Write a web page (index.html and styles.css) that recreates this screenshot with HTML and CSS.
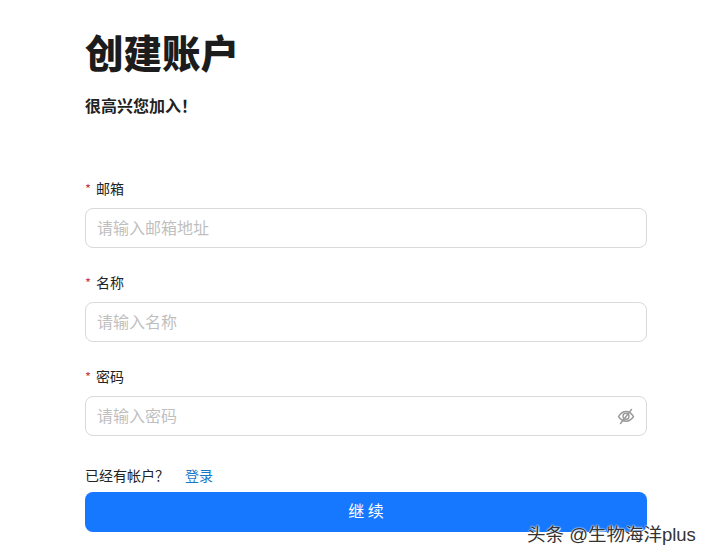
FILE: index.html
```html
<!DOCTYPE html>
<html lang="zh-CN">
<head>
<meta charset="utf-8">
<title>创建账户</title>
<link rel="stylesheet" href="styles.css">
</head>
<body>
<main class="page">
  <h1 class="title">创建账户</h1>
  <p class="subtitle">很高兴您加入！</p>
  <form class="form">
    <div class="field">
      <label class="label"><span class="req">*</span>邮箱</label>
      <div class="input"><span class="ph">请输入邮箱地址</span></div>
    </div>
    <div class="field">
      <label class="label"><span class="req">*</span>名称</label>
      <div class="input"><span class="ph">请输入名称</span></div>
    </div>
    <div class="field">
      <label class="label"><span class="req">*</span>密码</label>
      <div class="input"><span class="ph">请输入密码</span>
        <svg class="eye" viewBox="0 0 18 18" width="18" height="18" fill="none" stroke="#9a9a9a" stroke-width="1.4" stroke-linecap="round">
          <path d="M1.500 9.500c2-3.200 4.600-5 7.500-5s5.500 1.800 7.500 5c-2 3-4.600 4.700-7.500 4.700s-5.500-1.700-7.500-4.700z"/>
          <circle cx="9" cy="9.300" r="3"/>
          <path d="M3.500 16.500L14.500 2.500"/>
        </svg>
      </div>
    </div>
    <div class="switch"><span>已经有帐户？</span><a class="link">登录</a></div>
    <div class="btn">继 续</div>
  </form>
</main>
<div class="mark">头条 @生物海洋plus</div>
</body>
</html>
```
FILE: styles.css
```css
html, body { margin: 0; padding: 0; background: #fff; }
body {
  width: 712px; height: 560px; overflow: hidden; position: relative;
  font-family: "Noto Sans CJK SC", "Liberation Sans", sans-serif;
  color: #1f1f1f;
}
.page { width: 562px; margin-left: 85px; padding-top: 25px; }
.title { margin: 0; font-size: 38.500px; line-height: 52px; font-weight: 900; color: #1c1c1c; }
.subtitle { margin: 16px 0 0; font-size: 16px; line-height: 24px; font-weight: 700; color: #222; }
.form { margin-top: 60px; }
.field { margin-bottom: 23px; }
.label { display: block; font-size: 14px; line-height: 22px; height: 22px; margin-bottom: 9px; color: #222; }
.req { color: #c8404a; margin-right: 5px; font-size: 13px; }
.input {
  height: 40px; box-sizing: border-box; border: 1px solid #d9d9d9; border-radius: 8px;
  padding: 0 11px; display: flex; align-items: center; justify-content: space-between;
}
.ph { font-size: 16px; line-height: 22px; margin-top: -2px; color: #bfbfbf; }
.eye { display: block; }
.switch { margin-top: 28px; height: 22px; font-size: 14px; line-height: 22px; display: flex; gap: 16px; color: #222; margin-bottom: 6px; }
.link { color: #1677c4; }
.btn {
  height: 40px; border-radius: 8px; background: #1677ff; color: #fff;
  font-size: 16px; line-height: 37px; text-align: center;
}
.mark {
  position: absolute; left: 527px; top: 522px;
  font-family: "Liberation Sans", "Noto Sans CJK SC", sans-serif;
  font-size: 18.500px; line-height: 26px; color: #333;
  text-shadow: 0 0 1px #fff, 0 0 2px #fff, 1px 1px 1px #fff;
}
```
